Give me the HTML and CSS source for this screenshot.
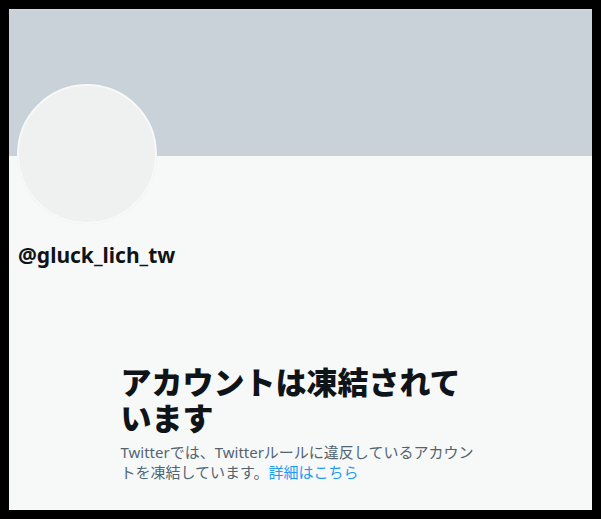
FILE: index.html
```html
<!DOCTYPE html>
<html lang="ja">
<head>
    <meta charset="UTF-8">
    <meta name="viewport" content="width=device-width, initial-scale=1.0">
    <title>@gluck_lich_tw</title>
    <link rel="stylesheet" href="styles.css">
</head>
<body>
    <div class="profile">
        <!-- Cabeçalho -->
        <div class="banner"></div>
        <div class="profile-info">
            <div class="avatar"></div>
            <div class="handle">@gluck_lich_tw</div>
        </div>

        <!-- Conta suspensa -->
        <div class="empty-state">
            <h1>アカウントは凍結されています</h1>
            <p>Twitterでは、Twitterルールに違反しているアカウントを凍結しています。<a href="#">詳細はこちら</a></p>
        </div>
    </div>
</body>
</html>
```

FILE: styles.css
```css
/* Página */
body {
    margin: 0;
    padding: 9px;
    background: #000000;
    height: 519px;
    box-sizing: border-box;
    font-family: 'Noto Sans', 'Noto Sans CJK JP', sans-serif;
}

.profile {
    background-color: #f7f9f9;
    height: 100%;
    overflow: hidden;
}

/* Banner */
.banner {
    height: 147px;
    background-color: #c9d2d9;
    border-top: 1px solid #d3dbe0;
    box-sizing: border-box;
}

.profile-info {
    padding: 0 8px;
}

.avatar {
    width: 136px;
    height: 136px;
    margin-top: -72px;
    border-radius: 50%;
    background-color: #eff1f1;
    border: 2px solid #f7f9f9;
    box-shadow: 0 0 1px rgba(0, 0, 0, 0.08);
}

.handle {
    margin-top: 19px;
    padding-left: 1px;
    font-size: 21px;
    font-weight: bold;
    line-height: 24px;
    color: #0f1419;
}

/* Estado vazio */
.empty-state {
    max-width: 360px;
    margin: 97px auto 0;
}

h1 {
    margin: 0 0 6px;
    font-size: 31px;
    line-height: 36px;
    font-weight: 800;
    color: #0f1419;
}

p {
    margin: 0;
    font-size: 15px;
    line-height: 20px;
    color: #536471;
}

a {
    color: #1d9bf0;
    text-decoration: none;
}
```
